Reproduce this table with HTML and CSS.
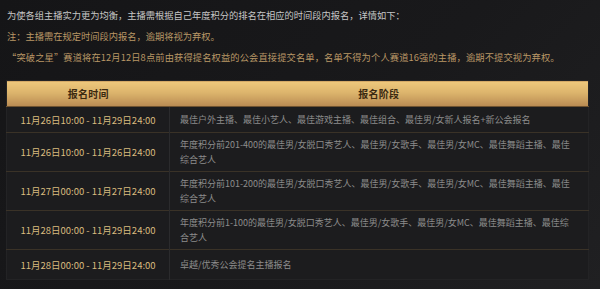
FILE: index.html
```html
<!DOCTYPE html>
<html lang="zh-CN">
<head>
<meta charset="utf-8">
<link rel="stylesheet" href="styles.css">
</head>
<body>
<div class="page">
  <p class="intro">为使各组主播实力更为均衡，主播需根据自己年度积分的排名在相应的时间段内报名，详情如下：</p>
  <p class="note">注：主播需在规定时间段内报名，逾期将视为弃权。</p>
  <p class="note wide">“突破之星”赛道将在12月12日8点前由获得提名权益的公会直接提交名单，名单不得为个人赛道16强的主播，逾期不提交视为弃权。</p>
  <table class="schedule">
    <colgroup><col class="c-time"><col class="c-stage"></colgroup>
    <thead>
      <tr class="h-head"><th>报名时间</th><th>报名阶段</th></tr>
    </thead>
    <tbody>
      <tr class="h-a"><td class="time">11月26日10:00 - 11月29日24:00</td><td class="stage">最佳户外主播、最佳小艺人、最佳游戏主播、最佳组合、最佳男/女新人报名+新公会报名</td></tr>
      <tr class="h-b"><td class="time">11月26日10:00 - 11月26日24:00</td><td class="stage">年度积分前201-400的最佳男/女脱口秀艺人、最佳男/女歌手、最佳男/女MC、最佳舞蹈主播、最佳<br>综合艺人</td></tr>
      <tr class="h-b"><td class="time">11月27日00:00 - 11月27日24:00</td><td class="stage">年度积分前101-200的最佳男/女脱口秀艺人、最佳男/女歌手、最佳男/女MC、最佳舞蹈主播、最佳<br>综合艺人</td></tr>
      <tr class="h-b"><td class="time">11月28日00:00 - 11月29日24:00</td><td class="stage">年度积分前1-100的最佳男/女脱口秀艺人、最佳男/女歌手、最佳男/女MC、最佳舞蹈主播、最佳综<br>合艺人</td></tr>
      <tr class="h-c"><td class="time">11月28日00:00 - 11月29日24:00</td><td class="stage">卓越/优秀公会提名主播报名</td></tr>
    </tbody>
  </table>
</div>
</body>
</html>
```

FILE: styles.css
```css
html, body {
  margin: 0;
  padding: 0;
}
body {
  width: 600px;
  height: 289px;
  overflow: hidden;
  background: linear-gradient(135deg, #151517 0%, #19191b 55%, #202022 100%);
  font-family: "Noto Sans CJK SC", "Noto Sans", sans-serif;
}
.page {
  padding: 5px 0 0 7px;
}
.intro, .note {
  margin: 0;
  font-size: 9.25px;
  line-height: 21px;
  white-space: nowrap;
}
.intro {
  color: #c6c6c6;
}
.note {
  color: #b99766;
}
.note.wide {
  letter-spacing: 0.13px;
}
.schedule {
  margin: 12px 0 0 -1px;
  width: 583px;
  table-layout: fixed;
  border-collapse: collapse;
  background: #1c1c1e;
  border: 1px solid #232325;
}
.c-time {
  width: 163px;
}
.schedule th {
  height: 25px;
  padding: 0;
  font-size: 10px;
  font-weight: 700;
  color: #3a2911;
  background: linear-gradient(180deg, #eec87c 0%, #dcb46c 45%, #b88a52 100%);
  border-bottom: 1px solid #6e5230;
  text-align: center;
  letter-spacing: 0.2px;
}
.schedule td {
  padding: 0;
  border-top: 1px solid #3a3227;
  vertical-align: middle;
}
.schedule td.time {
  text-align: center;
  color: #d9bb7e;
  font-size: 9.5px;
  border-right: 1px solid #2b2b2d;
}
.schedule td.stage {
  padding: 0 4px 0 10px;
  color: #8c8c8c;
  font-size: 9px;
  line-height: 15px;
}
.schedule thead tr.h-head + tr td {
  border-top: none;
}
.h-a {
  height: 26px;
}
.h-b {
  height: 39px;
}
.h-c {
  height: 30px;
}
```
